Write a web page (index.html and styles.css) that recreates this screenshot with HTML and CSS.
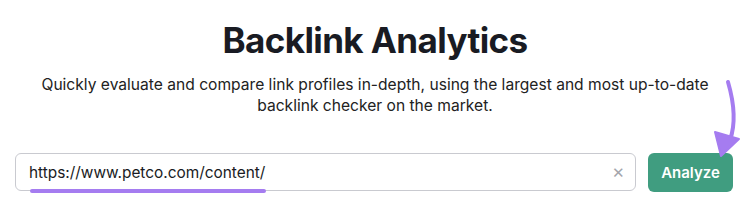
FILE: index.html
```html
<!DOCTYPE html>
<html lang="en">
    <head>
        <meta charset="UTF-8" />
        <title>Backlink Analytics</title>
        <link rel="stylesheet" href="styles.css">
    </head>
    <body>
        <div class="hero">
            <h1 class="title">Backlink Analytics</h1>
            <p class="lead">Quickly evaluate and compare link profiles in-depth, using the largest and most up-to-date<br>backlink checker on the market.</p>
            <div class="search_row">
                <div class="search_box">
                    <span class="url_text">https://www.petco.com/content/</span>
                    <span class="clear_btn">&#x2715;</span>
                </div>
                <button class="analyze_btn">Analyze</button>
            </div>
        </div>
        <!-- hand drawn arrow pointing at the button -->
        <svg class="pointer_arrow" width="40" height="90" viewBox="0 0 40 90">
            <path d="M23 6 C 30 30, 30 50, 25 64" fill="none" stroke="#a57cf0" stroke-width="4" stroke-linecap="round" />
            <path d="M10 56 L 34 63 L 16 80 Z" fill="#a57cf0" stroke="#a57cf0" stroke-width="2" stroke-linejoin="round" />
        </svg>
    </body>
</html>
```

FILE: styles.css
```css
body {
    margin: 0;
    background-color: #fff;
    font-family: Inter, "Noto Sans", sans-serif;
    color: #191b23;
    position: relative;
    width: 750px;
    height: 212px;
    overflow: hidden;
}
.hero {
    display: flex;
    flex-direction: column;
    align-items: center;
    padding-top: 18px;
}
.title {
    margin: 0;
    font-size: 35px;
    font-weight: 700;
    letter-spacing: -0.6px;
    line-height: 44px;
}
.lead {
    margin: 12px 0 0 0;
    font-size: 15.6px;
    line-height: 21px;
    text-align: center;
    color: #222;
}
.search_row {
    display: flex;
    gap: 12px;
    margin-top: 37px;
    align-self: stretch;
    padding: 0 17px 0 15px;
}
.search_box {
    flex: 1;
    height: 38px;
    box-sizing: border-box;
    border: 1px solid #c9cad0;
    border-radius: 6px;
    display: flex;
    align-items: center;
    padding: 0 10px 0 13px;
}
.url_text {
    flex: 1;
    font-size: 15.4px;
    color: #191b23;
    position: relative;
}
.url_text::after {
    content: "";
    position: absolute;
    left: 1px;
    top: 26px;
    width: 236px;
    height: 4px;
    border-radius: 2px;
    background-color: #a57cf0;
}
.clear_btn {
    font-size: 15px;
    color: #a3a5ac;
}
.analyze_btn {
    width: 85px;
    height: 39px;
    border: none;
    border-radius: 6px;
    background-color: #409d80;
    color: #fff;
    font-family: Inter, "Noto Sans", sans-serif;
    font-size: 15px;
    font-weight: 600;
}
.pointer_arrow {
    position: absolute;
    left: 705px;
    top: 76px;
}
```
